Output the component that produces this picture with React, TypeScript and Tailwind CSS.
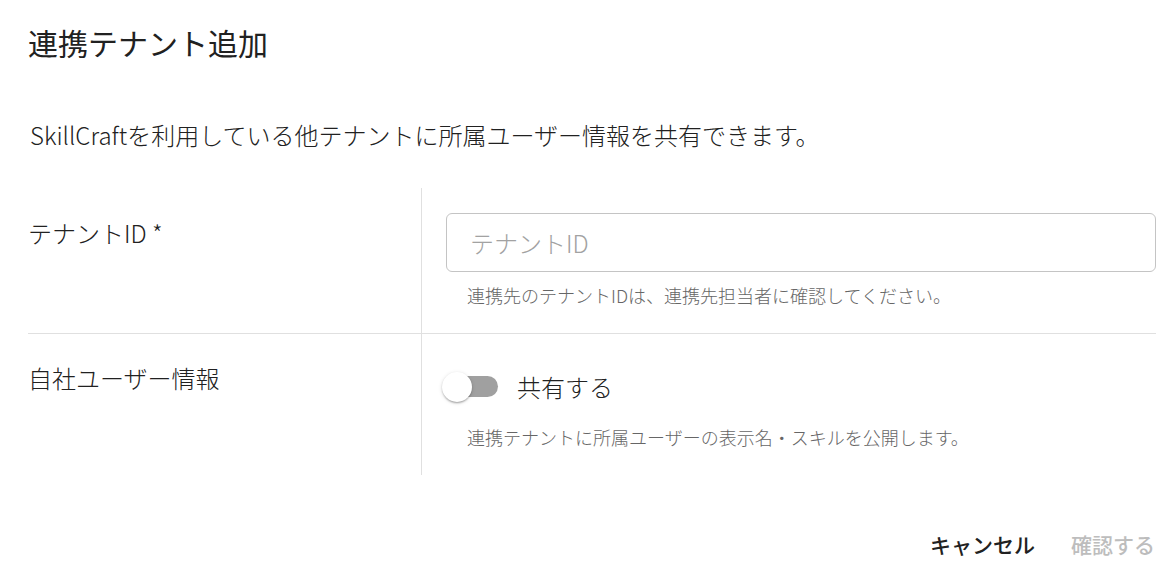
import React from "react";

function Switch() {
  return (
    <span className="relative inline-block w-[56px] h-[30px] shrink-0">
      <span className="absolute left-[5px] top-[4.5px] w-[51px] h-[21px] rounded-full bg-[#a0a0a0]" />
      <span className="absolute left-0 top-0 w-[30px] h-[30px] rounded-full bg-white shadow-[0_2px_2px_-1px_rgba(0,0,0,0.2),0_1px_2px_0_rgba(0,0,0,0.14),0_1px_4px_0_rgba(0,0,0,0.12)]" />
    </span>
  );
}

export default function App() {
  return (
    <div
      className="w-[1176px] h-[569px] bg-white text-[#212121] flex flex-col overflow-hidden font-light"
      style={{ fontFamily: '"Noto Sans CJK JP", "Noto Sans", sans-serif' }}
    >
      <h2 className="pl-[28px] pt-[21px] text-[30px] leading-[42px] font-normal">
        連携テナント追加
      </h2>
      <p className="pl-[30px] mt-[54px] text-[24px] leading-[36px]">
        SkillCraftを利用している他テナントに所属ユーザー情報を共有できます。
      </p>

      <div className="ml-[28px] mr-[20px] mt-[35px] grid grid-cols-[394px_1fr]">
        {/* tenant id */}
        <div className="h-[146px] border-b border-r border-[#e0e0e0] pt-[27px] text-[24px] leading-[36px]">
          テナントID *
        </div>
        <div className="h-[146px] border-b border-[#e0e0e0] pl-[24px] pt-[25px]">
          <div className="h-[59px] rounded-[6px] border border-[#c4c4c4] flex items-center pl-[23px]">
            <input
              className="w-full outline-none bg-transparent text-[24px] font-light placeholder:text-[#a2a2a2]"
              placeholder="テナントID"
            />
          </div>
          <p className="mt-[10px] pl-[21px] text-[18px] leading-[27px] text-[#666666]">
            連携先のテナントIDは、連携先担当者に確認してください。
          </p>
        </div>

        {/* share user info */}
        <div className="h-[141px] border-r border-[#e0e0e0] pt-[26px] text-[24px] leading-[36px]">
          自社ユーザー情報
        </div>
        <div className="h-[141px] pl-[20px] pt-[24px]">
          <div className="h-[57px] flex items-center">
            <Switch />
            <span className="ml-[19px] text-[24px] leading-[36px]">共有する</span>
          </div>
          <p className="mt-[9px] pl-[25px] text-[18px] leading-[27px] text-[#666666]">
            連携テナントに所属ユーザーの表示名・スキルを公開します。
          </p>
        </div>
      </div>

      <div className="mt-[42px] flex justify-end gap-[12px] pr-[9px]">
        <button className="px-[12px] py-[9px] text-[21px] leading-[37px] font-medium text-[#212121]">
          キャンセル
        </button>
        <button
          disabled
          className="px-[12px] py-[9px] text-[21px] leading-[37px] font-medium text-[#bdbdbd]"
        >
          確認する
        </button>
      </div>
    </div>
  );
}
